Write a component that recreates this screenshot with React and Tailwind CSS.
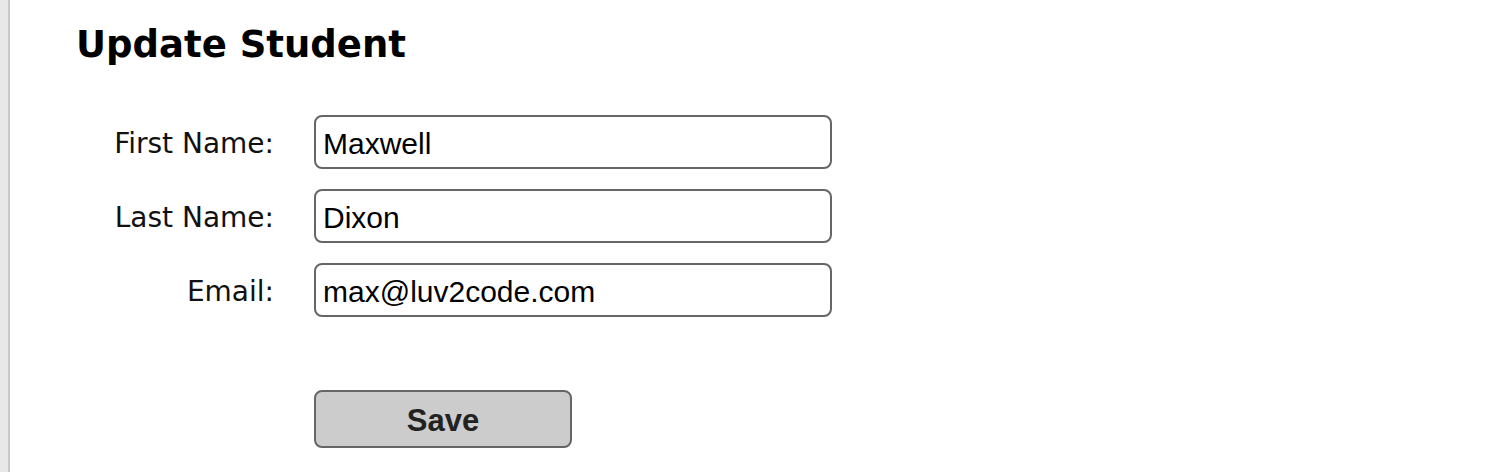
export default function App() {
  const fields = [
    { label: 'First Name:', value: 'Maxwell' },
    { label: 'Last Name:', value: 'Dixon' },
    { label: 'Email:', value: 'max@luv2code.com' },
  ];

  return (
    <div className="flex h-[472px] bg-white">
      <div className="w-[10px] shrink-0 bg-[#e8e8e8] border-r-2 border-[#c8c8c8]" />
      <div className="pl-[66px] pt-[23px]">
        <h2 className="text-[37px] leading-[44px] font-bold text-black font-['DejaVu_Sans',Verdana,sans-serif]">
          Update Student
        </h2>

        <form className="mt-[48px] flex flex-col gap-[20px]">
          {fields.map((f) => (
            <div key={f.label} className="flex items-center gap-[40px]">
              <label className="w-[198px] pt-[4px] text-right text-[28px] text-[#111] font-['DejaVu_Sans',Tahoma,sans-serif]">
                {f.label}
              </label>
              <input
                type="text"
                defaultValue={f.value}
                className="w-[518px] h-[54px] px-[7px] pt-[4px] border-2 border-[#666] rounded-[8px] text-[30px] text-black font-['Liberation_Sans',Arial,sans-serif] outline-none"
              />
            </div>
          ))}

          <div className="flex gap-[40px] mt-[53px]">
            <div className="w-[198px]" />
            <button
              type="button"
              className="w-[258px] h-[58px] pt-[4px] bg-[#cccccc] border-2 border-[#666] rounded-[8px] text-[31px] font-bold text-[#222] font-['Liberation_Sans',Arial,sans-serif]"
            >
              Save
            </button>
          </div>
        </form>
      </div>
    </div>
  );
}
